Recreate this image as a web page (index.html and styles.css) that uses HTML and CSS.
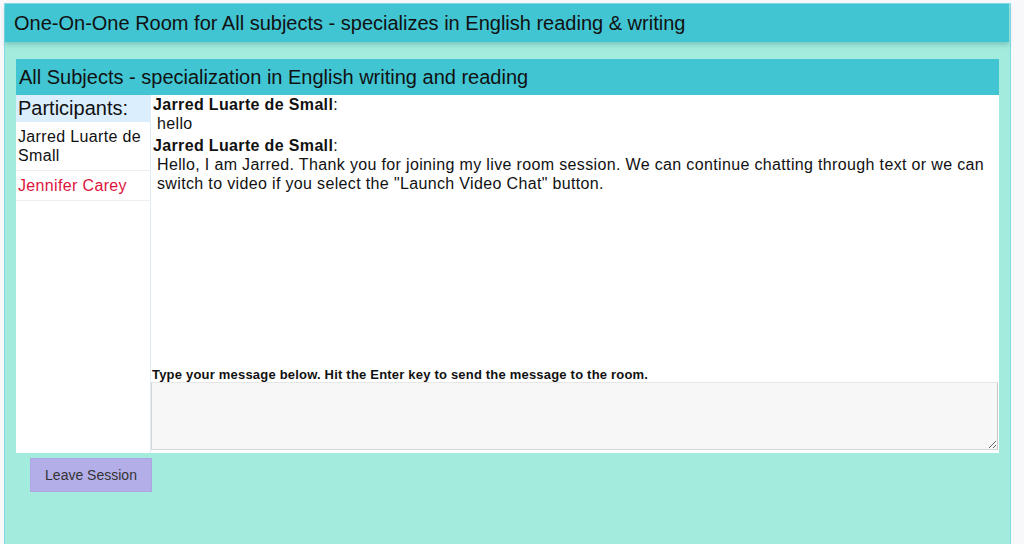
FILE: index.html
```html
<!DOCTYPE html>
<html lang="en">
  <head>
    <meta charset="UTF-8" />
    <title>One-On-One Room</title>
    <link rel="stylesheet" href="styles.css">
  </head>
  <body>
    <div class="room">
      <div class="room-header">One-On-One Room for All subjects - specializes in English reading &amp; writing</div>

      <div class="room-content">
        <div class="room-title">All Subjects - specialization in English writing and reading</div>

        <div class="room-body">
          <div class="participants">
            <div class="participants-title">Participants:</div>
            <div class="participant">Jarred Luarte de Small</div>
            <div class="participant participant-student">Jennifer Carey</div>
          </div>

          <div class="chat">
            <div class="messages">
              <div class="message">
                <b>Jarred Luarte de Small</b>:
                <p>hello</p>
              </div>
              <div class="message">
                <b>Jarred Luarte de Small</b>:
                <p>Hello, I am Jarred. Thank you for joining my live room session. We can continue chatting through text or we can switch to video if you select the "Launch Video Chat" button.</p>
              </div>
            </div>

            <label for="chatInput" class="chat-label">Type your message below. Hit the Enter key to send the message to the room.</label>
            <textarea id="chatInput" class="chat-input"></textarea>
          </div>
        </div>

        <button type="button" class="leave-btn">Leave Session</button>
      </div>
    </div>
  </body>
</html>
```

FILE: styles.css
```css
* {
  margin: 0;
  padding: 0;
  box-sizing: border-box;
}

body {
  font-family: "Liberation Sans", Arial, sans-serif;
  background-color: #f8f8fb;
  color: #111;
}

.room {
  width: 1007px;
  height: 560px;
  margin: 3px 0 0 4px;
  background-color: #a3ebdd;
  border: 1px solid #86d9e6;
  padding-right: 1px;
}

.room-header {
  height: 38px;
  padding: 8px 9px 0;
  background-color: #42c5d3;
  font-size: 20px;
  box-shadow: 0 3px 4px rgba(60, 140, 140, 0.35);
}

.room-content {
  padding: 17px 10px 0 11px;
}

.room-title {
  height: 36px;
  padding: 7px 3px 0;
  background-color: #42c5d3;
  font-size: 20px;
}

.room-body {
  display: flex;
  height: 358px;
  background-color: #fff;
}

.participants {
  width: 135px;
  border-right: 1px solid #dcecf8;
}

.participants-title {
  height: 27px;
  padding: 2px 2px 0;
  background-color: #dbeefd;
  font-size: 20px;
}

.participant {
  padding: 5px 2px 5px;
  font-size: 16px;
  line-height: 19px;
  letter-spacing: 0.35px;
  border-bottom: 1px solid #eeeeee;
}

.participant-student {
  color: #dc143c;
}

.chat {
  flex: 1;
  display: flex;
  flex-direction: column;
  padding-bottom: 3px;
}

.messages {
  flex: 1;
  padding: 0 2px;
  font-size: 16px;
  line-height: 19px;
  letter-spacing: 0.35px;
}

.message {
  margin-bottom: 3px;
}

.message p {
  padding-left: 4px;
}

.chat-label {
  display: block;
  padding-left: 1px;
  margin-bottom: 0;
  font-size: 13px;
  font-weight: bold;
  letter-spacing: 0.2px;
}

.chat-input {
  width: 847px;
  height: 68px;
  background-color: #f7f7f7;
  border: 1px solid #d6d6d6;
  border-top-color: #e6e6e6;
  border-right-color: #c8c8c8;
  font-family: inherit;
}

.leave-btn {
  width: 122px;
  height: 34px;
  margin: 5px 0 0 14px;
  background-color: #b3aee8;
  border: 1px solid #aea6e4;
  color: #333;
  font-family: inherit;
  font-size: 14px;
  cursor: pointer;
}
```
